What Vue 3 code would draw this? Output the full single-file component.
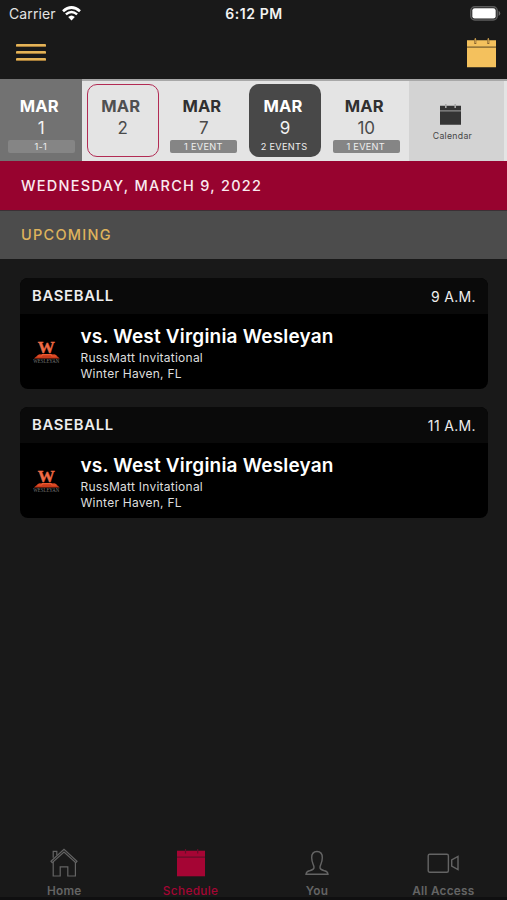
<script setup>
const days = [
  { month: 'MAR', day: '1', note: '1-1', kind: 'past' },
  { month: 'MAR', day: '2', note: '', kind: 'today' },
  { month: 'MAR', day: '7', note: '1 EVENT', kind: 'plain' },
  { month: 'MAR', day: '9', note: '2 EVENTS', kind: 'selected' },
  { month: 'MAR', day: '10', note: '1 EVENT', kind: 'plain' },
]
const games = [
  { sport: 'BASEBALL', time: '9 A.M.', title: 'vs. West Virginia Wesleyan', event: 'RussMatt Invitational', place: 'Winter Haven, FL' },
  { sport: 'BASEBALL', time: '11 A.M.', title: 'vs. West Virginia Wesleyan', event: 'RussMatt Invitational', place: 'Winter Haven, FL' },
]
const tabs = [
  { id: 'home', label: 'Home' },
  { id: 'schedule', label: 'Schedule' },
  { id: 'you', label: 'You' },
  { id: 'access', label: 'All Access' },
]
</script>

<template>
  <main class="screen">
    <div class="status">
      <div class="carrier">
        <span>Carrier</span>
        <svg width="19" height="15" viewBox="0 0 19 15" fill="none" stroke="#fff">
          <path d="M1 5.2Q9.5-2.2 18 5.2" stroke-width="2.7" />
          <path d="M3.9 8.4Q9.5 3.6 15.1 8.4" stroke-width="2.5" />
          <path d="M6.2 11Q9.5 8 12.8 11L9.5 14.4Z" fill="#fff" stroke="none" />
        </svg>
      </div>
      <span class="clock">6:12 PM</span>
      <svg class="battery" width="31" height="15" viewBox="0 0 31 15">
        <rect x=".8" y=".8" width="26.4" height="13.2" rx="4" fill="none" stroke="#5c5c5c" stroke-width="1.5" />
        <rect x="2.3" y="2.3" width="23.4" height="10.2" rx="2.3" fill="#fff" />
        <path d="M28.6 4.7Q32 7.4 28.6 10Z" fill="#6b6b6b" />
      </svg>
    </div>

    <header class="bar">
      <div class="menu"><i /><i /><i /></div>
      <svg width="29" height="30" viewBox="0 0 29 30">
        <path fill="#f4c15d" d="M0 2.2H29V8.7H0ZM0 10H29V29.3H0Z" />
        <path fill="#9a7839" d="M0 8.7H29V10H0Z" />
        <path stroke="#86612e" stroke-width="2" d="M8.3 1V6M21.3 1V6" />
        <path stroke="#d0a450" stroke-width="1" d="M8.3 0V5M21.3 0V5" />
      </svg>
    </header>

    <section class="strip">
      <div v-for="d in days" :key="d.day" class="day" :class="d.kind">
        <div class="tile">
          <b>{{ d.month }}</b>
          <span class="num">{{ d.day }}</span>
          <span v-if="d.note" class="note">{{ d.note }}</span>
        </div>
      </div>
      <div class="calendar">
        <svg width="21" height="21" viewBox="0 0 21 21">
          <path fill="#343434" d="M0 1.8H21V6H0ZM0 7.2H21V20.8H0Z" />
          <path fill="#777" d="M0 6H21V7.2H0Z" />
          <path stroke="#aaa" stroke-width="1.6" d="M5.8 0V4M15.2 0V4" />
        </svg>
        <span>Calendar</span>
      </div>
    </section>

    <h1 class="date">WEDNESDAY, MARCH 9, 2022</h1>
    <h2 class="upcoming">UPCOMING</h2>

    <section class="games">
      <article v-for="g in games" :key="g.time" class="card">
        <div class="card-head"><b>{{ g.sport }}</b><span>{{ g.time }}</span></div>
        <div class="card-body">
          <svg class="logo" width="30" height="40" viewBox="0 -6 30 40">
            <path d="M6 15.3H22L26.7 19.6H.9Z" fill="#c83b1b" />
            <path d="M4.5 17H8.5L9.5 15.6H18L19 17H23.5" stroke="#ee5a30" stroke-width="1.2" fill="none" />
            <text x="13.2" y="14" class="logo-w" text-anchor="middle" textLength="17" lengthAdjust="spacingAndGlyphs">W</text>
            <text x="13.3" y="24.3" class="logo-name" text-anchor="middle" textLength="26" lengthAdjust="spacingAndGlyphs">WESLEYAN</text>
          </svg>
          <div class="info">
            <h3>{{ g.title }}</h3>
            <p>{{ g.event }}</p>
            <p>{{ g.place }}</p>
          </div>
        </div>
      </article>
    </section>

    <nav class="tabs">
      <div v-for="t in tabs" :key="t.id" class="tab" :class="{ active: t.id === 'schedule' }">
        <svg v-if="t.id === 'home'" width="30" height="30" viewBox="0 0 30 30" fill="none" stroke="#646464" stroke-width="1.2">
          <path d="M2 14.3L15 2.3L28 14.3L26.8 15.7L15 5L3.2 15.7Z" />
          <path d="M4.2 10.8V4.4H7.8V8.2" />
          <path d="M4.2 15V29H11.2V19.8H18.8V29H26.4V15" />
        </svg>
        <svg v-else-if="t.id === 'schedule'" width="30" height="30" viewBox="0 0 30 30">
          <path fill="#a50534" d="M1 3.7H29V29.3H1Z" />
          <path stroke="#650e29" stroke-width="1.2" d="M1 10.2H29M9.5 2V6.5M21.7 2V6.5" />
        </svg>
        <svg v-else-if="t.id === 'you'" width="30" height="30" viewBox="0 0 30 30" fill="none" stroke="#646464" stroke-width="1.4">
          <path d="M4 27.3Q4.2 24.5 7.5 23.8C11 22.8 12.3 21.8 12 20C11.8 17.8 9.7 15.7 9.7 10.7C9.7 6.5 11.7 4.5 15 4.5S20.3 6.5 20.3 10.7C20.3 15.7 18.2 17.8 18 20C17.7 21.8 19 22.8 22.5 23.8Q25.8 24.5 26 27.3Z" />
        </svg>
        <svg v-else width="32" height="30" viewBox="0 0 32 30" fill="none" stroke="#646464" stroke-width="1.4">
          <rect x="1.2" y="7.2" width="20.2" height="18" rx="1.5" />
          <path d="M31 9.5V22.5L24.7 19V13Z" />
        </svg>
        <span>{{ t.label }}</span>
      </div>
    </nav>
  </main>
</template>

<style>
body { margin: 0; background: #191919; }
</style>

<style scoped>
* { box-sizing: border-box; }
.screen { width: 507px; height: 900px; display: flex; flex-direction: column; overflow: hidden; background: #191919; color: #fff; font-family: Inter, "Liberation Sans", sans-serif; border-bottom: 3px solid #0f0f10; }
.status { height: 28px; flex: none; display: grid; grid-template-columns: 1fr auto 1fr; align-items: center; padding: 0 6px 1px 7px; }
.carrier { display: flex; align-items: center; gap: 6px; padding-left: 2px; font-size: 14px; letter-spacing: .1px; color: #e3e3e3; }
.clock { font-size: 14px; font-weight: 600; letter-spacing: .55px; color: #f3f3f3; }
.battery { justify-self: end; }
.bar { height: 51px; flex: none; display: flex; justify-content: space-between; padding: 10px 11px 0 16px; }
.menu { display: flex; flex-direction: column; gap: 4px; padding-top: 6px; }
.menu i { width: 30px; height: 3px; border-radius: 1px; background: #e4b357; border-bottom: 1px solid #a27a38; }
.strip { height: 82px; flex: none; display: flex; background: #e4e4e4; border-top: 2px solid #a8a8a8; }
.day { width: 81.2px; flex: none; display: flex; justify-content: center; padding: 3px 0 0 1px; color: #303030; }
.tile { width: 72px; height: 73px; border-radius: 10px; display: flex; flex-direction: column; align-items: center; padding-top: 12px; }
.tile b { font-size: 16.5px; line-height: 21px; letter-spacing: .15px; margin-right: 4px; }
.num { font-size: 17px; line-height: 23px; color: #4a4a4a; }
.note { width: 67px; height: 13px; border-radius: 2px; background: #858585; color: #eee; font-size: 9.2px; line-height: 13px; text-align: center; letter-spacing: .28px; padding-right: 1px; }
.past { width: 81.6px; background: #727272; margin-top: -2px; padding-top: 5px; color: #fff; }
.past .num, .selected .num { color: #f2f2f2; }
.today .tile { border: 1.5px solid #b22b54; padding-top: 11px; color: #505050; }
.selected .tile { background: #484848; color: #fff; }
.selected .note { background: none; padding-right: 2px; }
.calendar { width: 95px; background: #d3d3d3; display: flex; flex-direction: column; align-items: center; padding: 23px 8px 0 0; margin-left: 2.6px; }
.calendar svg { margin-right: 4px; }
.calendar span { font-size: 8.7px; line-height: 12px; letter-spacing: .3px; color: #454545; margin-top: 5px; }
h1, h2, h3, p { margin: 0; }
.date, .upcoming { flex: none; height: 49px; line-height: 50px; padding-left: 21px; font-size: 14.5px; font-weight: 500; letter-spacing: 1.27px; }
.date { background: #97032f; color: #faeaf0; }
.upcoming { background: #4c4c4c; color: #dfb35c; border-top: 1px solid #3c3035; line-height: 48px; }
.games { flex: 1; display: flex; flex-direction: column; gap: 18px; padding: 19px 19px 0 20px; }
.card { height: 111px; border-radius: 8px; overflow: hidden; background: #000; }
.card-head { height: 36px; background: #0a0a0a; display: flex; justify-content: space-between; align-items: center; padding: 0 12px 0 12px; color: #eee; font-size: 14px; letter-spacing: .35px; }
.card-head b { font-weight: 600; font-size: 14.8px; letter-spacing: .7px; }
.card-body { display: flex; padding-left: 13px; }
.logo { margin-top: 19px; margin-right: 17.5px; flex: none; }
.logo-w { font: bold 17.5px "Liberation Serif", serif; fill: #f06b45; stroke: #f06b45; stroke-width: .4px; }
.logo-name { font: 5.5px "Liberation Serif", serif; fill: #777; }
.info { padding-top: 10px; }
.info h3 { font-size: 19px; line-height: 26px; font-weight: 600; letter-spacing: .19px; }
.info p { font-size: 12px; line-height: 16px; letter-spacing: .25px; color: #dedede; }
.tabs { height: 50px; flex: none; display: flex; padding-left: 1px; }
.tab { width: 126.4px; flex: none; display: flex; flex-direction: column; align-items: center; color: #646464; }
.tab span { font-size: 11.8px; line-height: 14px; font-weight: 600; letter-spacing: .25px; margin-top: 7px; }
.tab svg { flex: none; }
.tab.active { color: #a50534; }
.tab.active span { font-weight: 500; letter-spacing: .35px; }
</style>
